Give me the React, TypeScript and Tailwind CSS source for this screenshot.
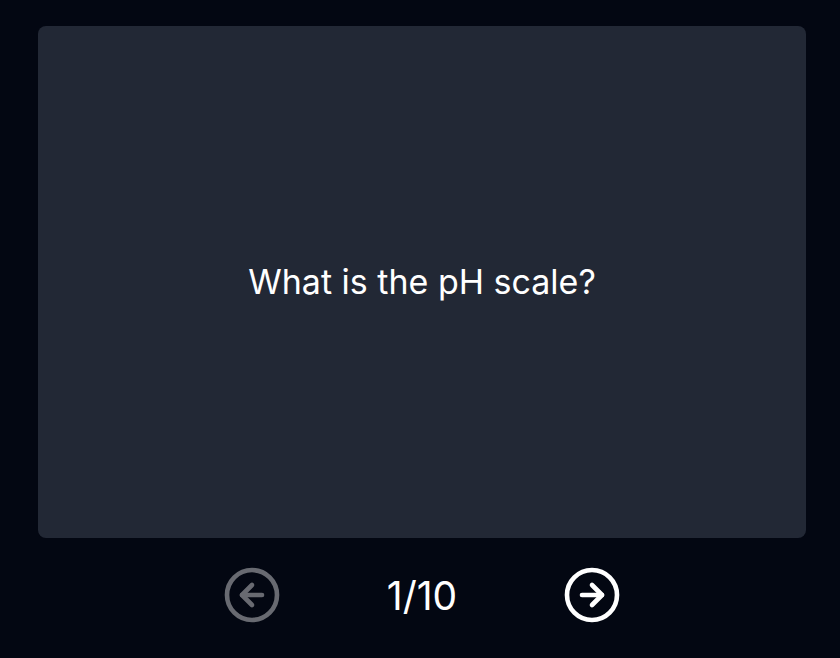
import { CircleArrowLeft, CircleArrowRight } from "lucide-react";

const cards = [
  { question: "What is the pH scale?" },
];

const App = () => {
  const index = 0;
  const total = 10;
  return (
    <div
      className="min-h-[658px] w-full bg-[#030712] pt-[26px] pl-[38px]"
      style={{ fontFamily: "Inter, 'Noto Sans', sans-serif" }}
    >
      <div className="flex w-[768px] flex-col items-center">
        <div className="flex h-[512px] w-full items-center justify-center rounded-lg bg-[#222835] px-8">
          <p className="text-[34px] leading-none text-white">{cards[index].question}</p>
        </div>
        <div className="mt-[27px] flex items-center gap-[105px]">
          <button disabled className="text-white opacity-40">
            <CircleArrowLeft size={60} strokeWidth={1.85} />
          </button>
          <span className="text-[39px] leading-none text-white">
            {index + 1}/{total}
          </span>
          <button className="text-white">
            <CircleArrowRight size={60} strokeWidth={1.85} />
          </button>
        </div>
      </div>
    </div>
  );
};

export default App;
